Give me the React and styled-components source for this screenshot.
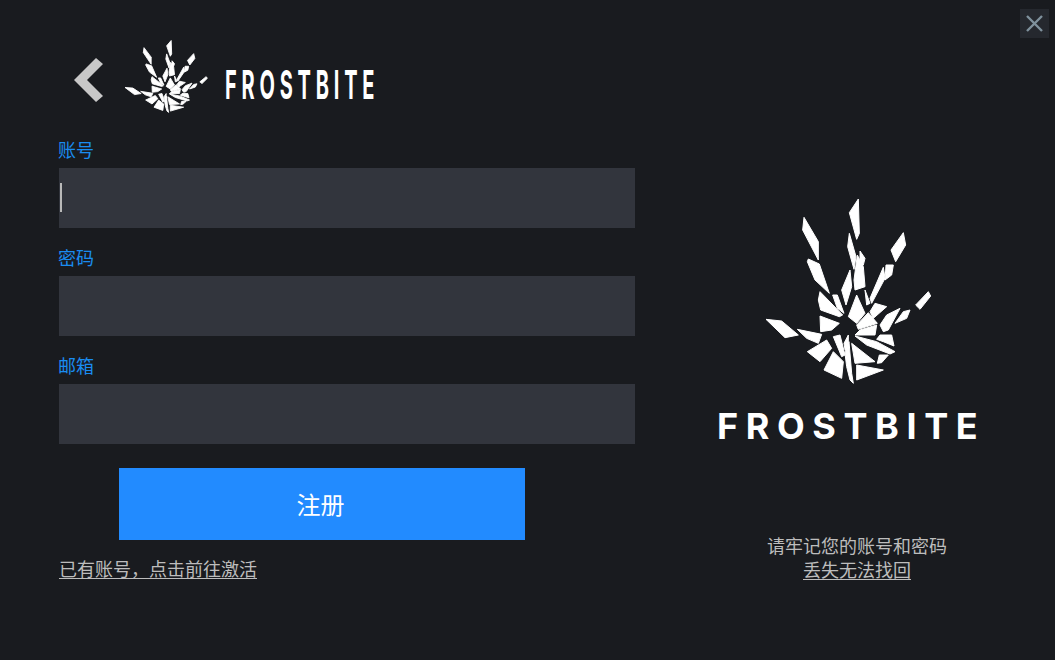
import React from 'react';
import styled, { createGlobalStyle } from 'styled-components';

const GlobalStyle = createGlobalStyle`
  html, body {
    margin: 0;
    padding: 0;
    background: #191b1f;
  }
`;

const Page = styled.div`
  width: 1055px;
  height: 660px;
  display: flex;
  overflow: hidden;
  background: #191b1f;
  font-family: "Liberation Sans", "Noto Sans CJK SC", sans-serif;
`;

const LeftPane = styled.div`
  width: 636px;
  box-sizing: border-box;
  padding: 37px 0 0 59px;
  display: flex;
  flex-direction: column;
`;

const Header = styled.div`
  display: flex;
  align-items: flex-start;
  height: 78px;
  margin-bottom: 17px;
`;

const BackIcon = styled.svg`
  width: 31px;
  height: 46px;
  margin: 20px 0 0 15px;
  flex-shrink: 0;
`;

const SmallLogo = styled.svg`
  width: 100px;
  height: 78px;
  margin-left: 12px;
  flex-shrink: 0;
`;

const SmallWordmark = styled.div`
  width: 150px;
  margin: 29px 0 0 8px;
  font-family: "Inter", sans-serif;
  font-weight: 700;
  font-size: 40px;
  line-height: 38px;
  letter-spacing: 9.6px;
  color: #ffffff;
  white-space: nowrap;
  transform: scaleX(0.5);
  transform-origin: left center;
`;

const Field = styled.div`
  margin-bottom: 12px;
`;

const Label = styled.div`
  height: 36px;
  line-height: 38px;
  margin-left: -1px;
  font-size: 18px;
  color: #1a8cf0;
`;

const Input = styled.div`
  width: 576px;
  height: 60px;
  background: #32353d;
  display: flex;
  align-items: center;
  padding-left: 1px;
  box-sizing: border-box;
`;

const Caret = styled.div`
  width: 2px;
  height: 29px;
  margin-top: -1px;
  background: #b9b9b9;
`;

const Submit = styled.button`
  display: block;
  width: 406px;
  height: 72px;
  margin: 12px 0 0 60px;
  padding: 0 3px 2px 0;
  border: 0;
  background: #228bff;
  color: #ffffff;
  font-family: inherit;
  font-size: 24px;
`;

const TextLink = styled.a`
  color: #bdbdbd;
  font-size: 18px;
  line-height: 24px;
  text-decoration: underline;
  text-underline-offset: 2px;
`;

const LoginRow = styled.div`
  margin-top: 18px;
  line-height: 26px;
`;

const RightPane = styled.div`
  flex: 1;
  display: flex;
  flex-direction: column;
`;

const CloseButton = styled.div`
  align-self: flex-end;
  width: 29px;
  height: 29px;
  margin: 9px 6px 0 0;
  background: #25282e;
  display: flex;
  align-items: center;
  justify-content: center;
  color: #7f919c;
`;

const BigLogo = styled.svg`
  width: 200px;
  height: 200px;
  margin: 152px 0 0 114px;
`;

const BigWordmark = styled.div`
  margin: 13px 0 0 81px;
  font-family: "Inter", sans-serif;
  font-weight: 700;
  font-size: 36px;
  line-height: 46px;
  letter-spacing: 7.6px;
  color: #ffffff;
  white-space: nowrap;
`;

const Notice = styled.div`
  margin: 86px 0 0 41px;
  width: 360px;
  text-align: center;
  font-size: 18px;
  line-height: 24px;
  color: #bdbdbd;
`;

// hand logo pieces, traced from the big logo on a 600 box
const shards = [
  '325,27 298,68 320,148 328,130',
  '298,130 318,200 312,238 293,170',
  '330,183 345,205 340,225 330,230',
  '322,195 340,230 345,290 315,300 312,270',
  '162,82 205,155 205,210 158,120',
  '175,207 208,222 238,310 195,270 172,215',
  '460,128 467,165 437,215 423,180',
  '408,225 430,225 425,255 405,270',
  '400,232 405,265 365,340 360,325',
  '535,305 542,318 510,358 497,345',
  '480,360 470,385 435,400 460,365',
  '450,355 410,375 390,405 400,425 415,420',
  '375,340 410,350 370,385 360,365',
  '48,388 95,393 145,435 105,443',
  '142,418 215,433 205,460 170,445',
  '210,305 278,375 268,380 212,360 205,330',
  '210,378 268,400 245,420 212,425',
  '248,315 262,315 282,370 262,355',
  '300,240 305,290 288,345 275,300',
  '320,315 345,370 320,400 295,380',
  '345,300 360,340 350,345',
  '355,368 382,400 325,418 320,405',
  '380,405 375,435 315,435 330,420',
  '390,435 425,435 432,468 400,455 380,448',
  '315,438 380,455 435,485 420,492 350,465',
  '250,440 270,435 285,495 275,500',
  '295,435 282,460 285,480 295,485',
  '172,485 230,450 245,475 210,515',
  '250,485 280,515 275,565 222,540',
  '297,455 305,550 310,580 300,570 290,530 285,490',
  '305,460 375,515 315,520',
  '320,525 400,540 320,570',
  '388,495 415,495 395,518 382,520',
];

const Shards = ({ weight }) => (
  <g fill="#ffffff" stroke="#ffffff" strokeWidth={weight} strokeLinejoin="round">
    {shards.map((points) => (
      <polygon key={points} points={points} />
    ))}
  </g>
);

const App = () => {
  return (
    <Page>
      <GlobalStyle />
      <LeftPane>
        <Header>
          <BackIcon viewBox="0 0 31 46">
            <polygon fill="#c8c8c8" points="0,23 22,1 29,7 13,23 29,39 22,45" />
          </BackIcon>
          <SmallLogo viewBox="0 0 600 600" preserveAspectRatio="none">
            <Shards weight={6} />
          </SmallLogo>
          <SmallWordmark>FROSTBITE</SmallWordmark>
        </Header>
        <Field>
          <Label>账号</Label>
          <Input>
            <Caret />
          </Input>
        </Field>
        <Field>
          <Label>密码</Label>
          <Input />
        </Field>
        <Field>
          <Label>邮箱</Label>
          <Input />
        </Field>
        <Submit>注册</Submit>
        <LoginRow>
          <TextLink>已有账号，点击前往激活</TextLink>
        </LoginRow>
      </LeftPane>
      <RightPane>
        <CloseButton>
          <svg width="19" height="19" viewBox="0 0 19 19">
            <path d="M2 2 L17 17 M17 2 L2 17" stroke="currentColor" strokeWidth="2.4" fill="none" />
          </svg>
        </CloseButton>
        <BigLogo viewBox="0 0 600 600">
          <Shards weight={3} />
        </BigLogo>
        <BigWordmark>FROSTBITE</BigWordmark>
        <Notice>
          请牢记您的账号和密码
          <br />
          <TextLink>丢失无法找回</TextLink>
        </Notice>
      </RightPane>
    </Page>
  );
};

export default App;
